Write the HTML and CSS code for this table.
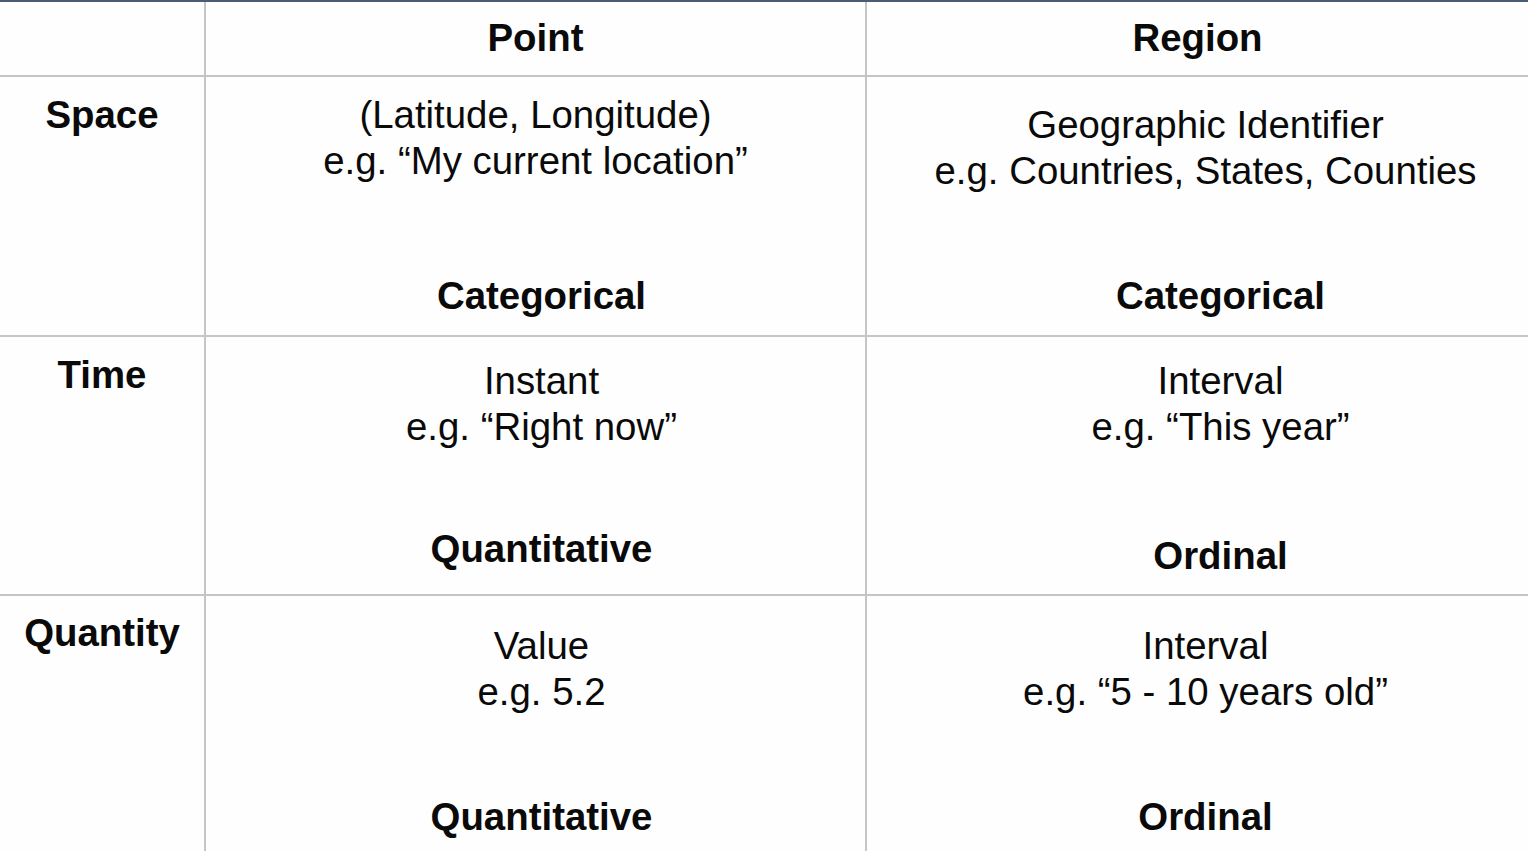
FILE: index.html
```html
<!DOCTYPE html>
<html lang="en">
<head>
<meta charset="utf-8">
<title>Spatial and temporal data types</title>
<link rel="stylesheet" href="styles.css">
</head>
<body>
<div class="sheet">
  <div class="cell corner"></div>
  <div class="cell head">Point</div>
  <div class="cell head last">Region</div>

  <div class="cell label pt-15">Space</div>
  <div class="cell body pt-15 pb-16">
    <div class="desc">(Latitude, Longitude)<br>e.g. “My current location”</div>
    <div class="type shift-6">Categorical</div>
  </div>
  <div class="cell body last pt-25 pb-16">
    <div class="desc shift-8">Geographic Identifier<br>e.g. Countries, States, Counties</div>
    <div class="type shift-23">Categorical</div>
  </div>

  <div class="cell label pt-15">Time</div>
  <div class="cell body pt-21 pb-22">
    <div class="desc shift-6">Instant<br>e.g. “Right now”</div>
    <div class="type shift-6">Quantitative</div>
  </div>
  <div class="cell body last pt-21 pb-15">
    <div class="desc shift-23">Interval<br>e.g. “This year”</div>
    <div class="type shift-23">Ordinal</div>
  </div>

  <div class="cell label bottom pt-14">Quantity</div>
  <div class="cell body bottom pt-27 pb-11">
    <div class="desc shift-6">Value<br>e.g. 5.2</div>
    <div class="type shift-6">Quantitative</div>
  </div>
  <div class="cell body bottom last pt-27 pb-11">
    <div class="desc shift-8">Interval<br>e.g. “5 - 10 years old”</div>
    <div class="type shift-8">Ordinal</div>
  </div>
</div>
</body>
</html>
```

FILE: styles.css
```css
* { box-sizing: border-box; }
html, body {
  margin: 0;
  padding: 0;
  background: #fefefe;
}
body {
  font-family: "Liberation Sans", Arial, sans-serif;
  color: #0a0a0a;
  font-size: 38.4px;
  line-height: 46px;
}
.sheet {
  height: 851px;
  overflow: hidden;
  border-top: 2px solid #4b5c78;
  display: grid;
  grid-template-columns: 206px 661px 1fr;
  grid-template-rows: 75px 260px 259px 1fr;
}
.cell {
  border-right: 2px solid #c5c5c5;
  border-bottom: 2px solid #c5c5c5;
}
.cell.last { border-right: none; }
.cell.bottom { border-bottom: none; }
.head {
  font-weight: bold;
  display: flex;
  align-items: center;
  justify-content: center;
  padding-bottom: 2px;
}
.label {
  font-weight: bold;
  text-align: center;
}
.body {
  display: flex;
  flex-direction: column;
  text-align: center;
}
.type {
  margin-top: auto;
  font-weight: bold;
}
.shift-6 { padding-left: 12px; }
.shift-8 { padding-left: 16px; }
.shift-23 { padding-left: 46px; }
.pt-14 { padding-top: 14px; }
.pt-15 { padding-top: 15px; }
.pt-21 { padding-top: 21px; }
.pt-25 { padding-top: 25px; }
.pt-27 { padding-top: 27px; }
.pb-11 { padding-bottom: 11px; }
.pb-15 { padding-bottom: 15px; }
.pb-16 { padding-bottom: 16px; }
.pb-22 { padding-bottom: 22px; }
```
